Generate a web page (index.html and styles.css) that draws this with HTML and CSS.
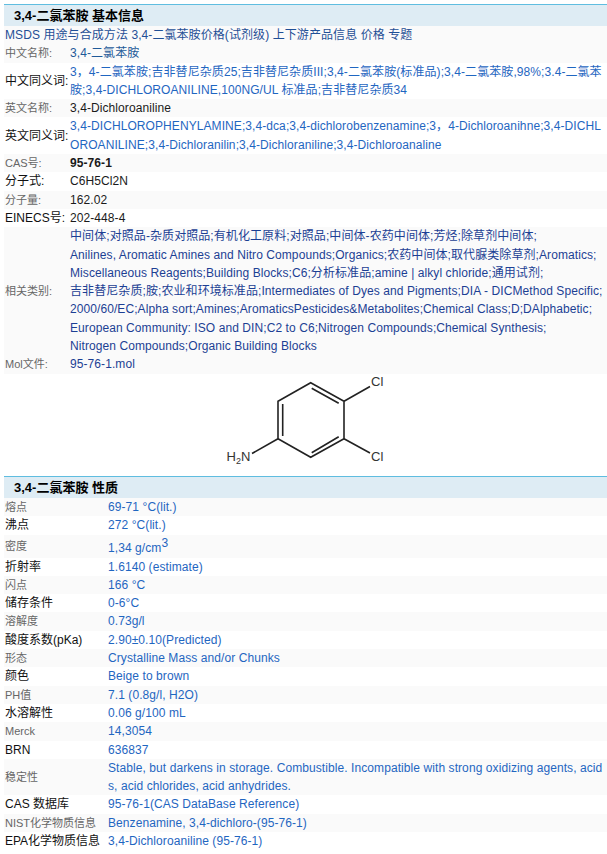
FILE: index.html
```html
<!DOCTYPE html>
<html lang="zh">
<head>
<meta charset="utf-8">
<title>3,4-二氯苯胺</title>
<link rel="stylesheet" href="styles.css">
</head>
<body>
<section class="section">
  <h2 class="head">3,4-二氯苯胺 基本信息</h2>
  <div class="row stripe nav">MSDS 用途与合成方法 3,4-二氯苯胺价格(试剂级) 上下游产品信息 价格 专题</div>
  <div class="row basic stripe"><span class="key dim">中文名称:</span><span class="val teal">3,4-二氯苯胺</span></div>
  <div class="row basic"><span class="key">中文同义词:</span><span class="val link">3，4-二氯苯胺;吉非替尼杂质25;吉非替尼杂质III;3,4-二氯苯胺(标准品);3,4-二氯苯胺,98%;3.4-二氯苯胺;3,4-DICHLOROANILINE,100NG/UL 标准品;吉非替尼杂质34</span></div>
  <div class="row basic stripe"><span class="key dim">英文名称:</span><span class="val dark">3,4-Dichloroaniline</span></div>
  <div class="row basic"><span class="key">英文同义词:</span><span class="val link">3,4-DICHLOROPHENYLAMINE;3,4-dca;3,4-dichlorobenzenamine;3，4-Dichloroanihne;3,4-DICHLOROANILINE;3,4-Dichloranilin;3,4-Dichloraniline;3,4-Dichloroanaline</span></div>
  <div class="row basic stripe"><span class="key dim">CAS号:</span><span class="val dark strong">95-76-1</span></div>
  <div class="row basic"><span class="key">分子式:</span><span class="val dark">C6H5Cl2N</span></div>
  <div class="row basic stripe"><span class="key dim">分子量:</span><span class="val dark">162.02</span></div>
  <div class="row basic"><span class="key">EINECS号:</span><span class="val dark">202-448-4</span></div>
  <div class="row basic stripe"><span class="key dim">相关类别:</span><span class="val navy">中间体;对照品-杂质对照品;有机化工原料;对照品;中间体-农药中间体;芳烃;除草剂中间体;<br>Anilines, Aromatic Amines and Nitro Compounds;Organics;农药中间体;取代脲类除草剂;Aromatics;<br>Miscellaneous Reagents;Building Blocks;C6;分析标准品;amine | alkyl chloride;通用试剂;<br>吉非替尼杂质;胺;农业和环境标准品;Intermediates of Dyes and Pigments;DIA - DICMethod Specific;<br>2000/60/EC;Alpha sort;Amines;AromaticsPesticides&amp;Metabolites;Chemical Class;D;DAlphabetic;<br>European Community: ISO and DIN;C2 to C6;Nitrogen Compounds;Chemical Synthesis;<br>Nitrogen Compounds;Organic Building Blocks</span></div>
  <div class="row basic stripe"><span class="key dim">Mol文件:</span><span class="val navy">95-76-1.mol</span></div>
  <div class="structure">
    <svg class="mol" width="167" height="102" viewBox="222 374 167 102" role="img" aria-label="3,4-二氯苯胺结构式">
      <g class="bonds">
        <path d="M310.7 382.7L344 401.3V438.7L310.7 457.3L278 438.7V401.3Z"/>
        <path d="M282.7 404V436M311.7 388.3L338.7 403.3M311.7 452.7L338.7 436.7"/>
        <path d="M344 401.3L370 386.5M344 438.7L370 453M278 438.7L252 453.5"/>
      </g>
      <text class="atom" x="371" y="386">Cl</text>
      <text class="atom" x="371" y="461">Cl</text>
      <text class="atom" x="226.500" y="461">H<tspan class="sub" dy="3">2</tspan><tspan dy="-3">N</tspan></text>
    </svg>
  </div>
</section>
<section class="section">
  <h2 class="head">3,4-二氯苯胺 性质</h2>
  <div class="row prop stripe"><span class="key dim">熔点</span><span class="val link">69-71 °C(lit.)</span></div>
  <div class="row prop"><span class="key">沸点</span><span class="val link">272 °C(lit.)</span></div>
  <div class="row prop stripe tall"><span class="key dim">密度</span><span class="val link">1,34 g/cm<sup class="up">3</sup></span></div>
  <div class="row prop"><span class="key">折射率</span><span class="val link">1.6140 (estimate)</span></div>
  <div class="row prop stripe"><span class="key dim">闪点</span><span class="val link">166 °C</span></div>
  <div class="row prop"><span class="key">储存条件</span><span class="val link">0-6°C</span></div>
  <div class="row prop stripe"><span class="key dim">溶解度</span><span class="val link">0.73g/l</span></div>
  <div class="row prop"><span class="key">酸度系数(pKa)</span><span class="val link">2.90±0.10(Predicted)</span></div>
  <div class="row prop stripe"><span class="key dim">形态</span><span class="val link">Crystalline Mass and/or Chunks</span></div>
  <div class="row prop"><span class="key">颜色</span><span class="val link">Beige to brown</span></div>
  <div class="row prop stripe"><span class="key dim">PH值</span><span class="val link">7.1 (0.8g/l, H2O)</span></div>
  <div class="row prop"><span class="key">水溶解性</span><span class="val link">0.06 g/100 mL</span></div>
  <div class="row prop stripe"><span class="key dim">Merck</span><span class="val link">14,3054</span></div>
  <div class="row prop"><span class="key">BRN</span><span class="val link">636837</span></div>
  <div class="row prop stripe"><span class="key dim">稳定性</span><span class="val link">Stable, but darkens in storage. Combustible. Incompatible with strong oxidizing agents, acids, acid chlorides, acid anhydrides.</span></div>
  <div class="row prop"><span class="key">CAS 数据库</span><span class="val link">95-76-1(CAS DataBase Reference)</span></div>
  <div class="row prop stripe"><span class="key dim">NIST化学物质信息</span><span class="val link">Benzenamine, 3,4-dichloro-(95-76-1)</span></div>
  <div class="row prop"><span class="key">EPA化学物质信息</span><span class="val link">3,4-Dichloroaniline (95-76-1)</span></div>
</section>
</body>
</html>
```
FILE: styles.css
```css
* { box-sizing: border-box; }
html, body { margin: 0; padding: 0; background: #fff; }
body {
  padding: 4px 0 0 4px;
  font: 12px/18.3px "Liberation Sans", "Noto Sans CJK SC", sans-serif;
  color: #000;
  overflow: hidden;
}
.head {
  margin: 0;
  height: 22px;
  padding-left: 10px;
  border-top: 1px solid #5fbde0;
  background: #deecf4;
  font-size: 13px;
  line-height: 21px;
  font-weight: bold;
  color: #000;
}
.row { display: flex; align-items: center; letter-spacing: .08px; }
.stripe { background: #fafafa; }
.nav { color: #1f4f96; padding-left: 1px; }
.key { flex: none; color: #111; letter-spacing: 0; padding-left: 1px; }
.dim { color: #666; font-size: 11px; }
.basic .key { width: 66px; }
.prop .key { width: 104px; }
.val { flex: 1; min-width: 0; word-break: break-all; }
.teal { color: #1f5a99; }
.link { color: #1f66c1; }
.dark { color: #1a1a1a; }
.strong { font-weight: bold; }
.navy { color: #1c3f94; }
.tall { height: 23px; }
.tall .val { padding-top: 5px; }
.up { font-size: 12px; line-height: 0; vertical-align: 5px; }
.structure { display: flex; justify-content: center; height: 102.3px; }
.mol { display: block; }
.bonds { fill: none; stroke: #222; stroke-width: 1.6; }
.atom { font: 13px "Liberation Sans", sans-serif; fill: #333; }
.sub { font-size: 9px; }
```
